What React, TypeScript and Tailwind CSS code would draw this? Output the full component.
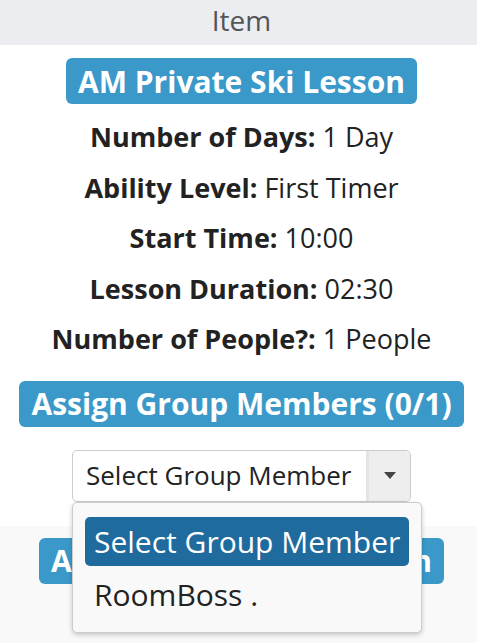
import React from "react";

const details = [
  { label: "Number of Days:", value: "1 Day" },
  { label: "Ability Level:", value: "First Timer" },
  { label: "Start Time:", value: "10:00" },
  { label: "Lesson Duration:", value: "02:30" },
  { label: "Number of People?:", value: "1 People" },
];

export default function App() {
  return (
    <div className="w-[477px] h-[643px] overflow-hidden bg-white">
      <div
        className="w-[483px] text-[#222]"
        style={{ fontFamily: '"Open Sans", "Noto Sans", sans-serif' }}
      >
        <div className="h-[45px] bg-[#ebedf1] flex items-center justify-center pb-[5px] text-[28px] text-[#555]">
          Item
        </div>

        <div className="flex flex-col items-center pt-[13px]">
          <div className="h-[46px] px-[12px] rounded-[6px] bg-[#3a99c9] text-white font-bold text-[30px] flex items-center">
            AM Private Ski Lesson
          </div>

          <div className="mt-[8px] flex flex-col items-center">
            {details.map((d) => (
              <div key={d.label} className="h-[50.5px] flex items-center text-[27px]">
                <span className="font-bold mr-[7px]">{d.label}</span>
                <span>{d.value}</span>
              </div>
            ))}
          </div>

          <div className="mt-[16px] h-[46px] px-[12px] rounded-[6px] bg-[#3a99c9] text-white font-bold text-[30px] flex items-center">
            Assign Group Members (0/1)
          </div>

          <div className="relative mt-[23px] w-[339px]">
            <div className="h-[52px] flex items-stretch border border-[#ccc] rounded-[5px] bg-white overflow-hidden">
              <div className="flex-1 flex items-center pl-[13px] text-[26px] text-[#222]">
                Select Group Member
              </div>
              <div className="w-[44px] border-l-[3px] border-[#e4e4e4] bg-[#eeeeee] flex items-center justify-center">
                <svg width="12" height="7" viewBox="0 0 12 7">
                  <path d="M0 0h12L6 7z" fill="#444" />
                </svg>
              </div>
            </div>

            <div className="absolute left-0 top-[52px] w-[350px] h-[131px] z-10 bg-[#f9f9f9] border border-[#ccc] rounded-[5px] shadow-[0_2px_5px_rgba(0,0,0,0.2)] px-[12px] pt-[14px]">
              <div className="h-[49px] rounded-[5px] bg-[#1f6b9e] text-white text-[30px] flex items-center pl-[9px] whitespace-nowrap">
                Select Group Member
              </div>
              <div className="h-[58px] flex items-center pl-[9px] text-[30px] text-[#222]">
                RoomBoss .
              </div>
            </div>
          </div>
        </div>

        <div className="mt-[24px] bg-[#f9f9f9] h-[200px] flex justify-center pt-[12px]">
          <div className="w-[405px] h-[46px] rounded-[6px] bg-[#3a99c9] text-white font-bold text-[30px] flex items-center justify-between px-[12px]">
            <span>A</span>
            <span>n</span>
          </div>
        </div>
      </div>
    </div>
  );
}
